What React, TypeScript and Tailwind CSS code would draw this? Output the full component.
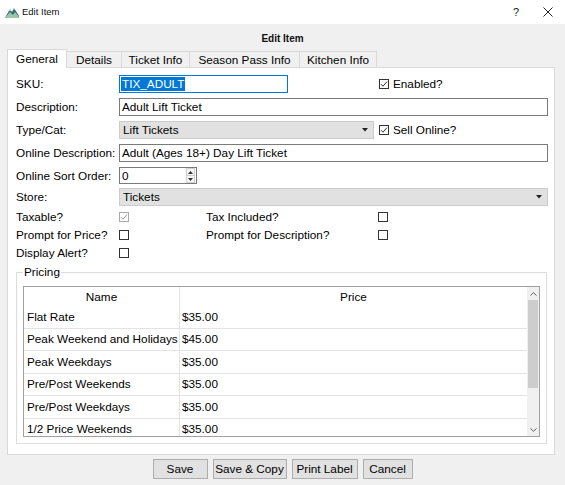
import React from "react";

const rows = [
  ["Flat Rate", "$35.00"],
  ["Peak Weekend and Holidays", "$45.00"],
  ["Peak Weekdays", "$35.00"],
  ["Pre/Post Weekends", "$35.00"],
  ["Pre/Post Weekdays", "$35.00"],
  ["1/2 Price Weekends", "$35.00"],
];

const tabs = [
  { label: "Details", cls: "w-[55px]" },
  { label: "Ticket Info", cls: "w-[68px]" },
  { label: "Season Pass Info", cls: "w-[110px]" },
  { label: "Kitchen Info", cls: "w-[77px]" },
];

function Box({ checked = false, dim = false }: { checked?: boolean; dim?: boolean }) {
  return (
    <span
      className={`w-[10px] h-[10px] shrink-0 border bg-white flex items-center justify-center ${
        dim ? "border-[#a9a9a9]" : "border-[#333333]"
      }`}
    >
      {checked && (
        <svg width="8" height="8" viewBox="0 0 8 8">
          <path d="M1 4.2 L3 6.2 L7 1.6" fill="none" stroke={dim ? "#9a9a9a" : "#333333"} strokeWidth="1" />
        </svg>
      )}
    </span>
  );
}

function Arrow() {
  return (
    <svg width="6" height="4" viewBox="0 0 6 4">
      <path d="M0 0 H6 L3 3.5 Z" fill="#222" />
    </svg>
  );
}

function Label({ children }: { children: React.ReactNode }) {
  return <span className="w-[103px] shrink-0 text-[#000]">{children}</span>;
}

export default function App() {
  return (
    <div className="w-[565px] h-[485px] bg-[#f0f0f0] font-['Liberation_Sans',Arial,sans-serif] text-[11.75px] text-black overflow-hidden">
      {/* title bar */}
      <div className="h-[24px] bg-white flex items-center">
        <svg className="ml-[5px]" width="14" height="11" viewBox="0 0 14 11">
          <path d="M0 11 L5 2 L7 5 L9 1 L14 9 L14 11 Z" fill="#2f6f7a" />
          <path d="M0 11 L5 5 L8 8 L10 5 L14 10 L14 11 Z" fill="#9cc7a4" />
          <path d="M4 3.8 L5 2 L6 3.8 Z M8.3 2.3 L9 1 L9.8 2.4 Z" fill="#ffffff" />
        </svg>
        <span className="ml-[3px] text-[9.5px] text-[#111]">Edit Item</span>
        <div className="ml-auto flex items-center">
          <span className="w-[30px] text-center text-[11px] text-[#222]">?</span>
          <span className="w-[34px] flex justify-center">
            <svg width="10" height="10" viewBox="0 0 10 10">
              <path d="M0.5 0.5 L9.5 9.5 M9.5 0.5 L0.5 9.5" stroke="#222" strokeWidth="1" />
            </svg>
          </span>
        </div>
      </div>

      {/* dialog heading */}
      <div className="h-[25px] pt-[3px] flex items-center justify-center font-bold text-[10px] text-[#111]">
        Edit Item
      </div>

      {/* tabs */}
      <div className="h-[18px] pl-[7px] flex items-end">
        <div className="relative z-10 -mb-px w-[60px] h-[19px] bg-white border border-b-0 border-[#d9d9d9] flex items-center justify-center pb-[1px]">
          General
        </div>
        {tabs.map((t) => (
          <div
            key={t.label}
            className={`${t.cls} h-[16px] bg-[#f0f0f0] border border-l-0 border-b-0 border-[#d9d9d9] flex items-center justify-center`}
          >
            {t.label}
          </div>
        ))}
      </div>

      {/* panel */}
      <div className="ml-[7px] w-[548px] h-[388px] bg-white border border-[#d9d9d9] pl-[8px] pt-[7px]">
        {/* SKU */}
        <div className="h-[18px] flex items-center">
          <Label>SKU:</Label>
          <div className="w-[169px] h-[18px] border border-[#0078d7] flex items-center pl-[1px]">
            <span className="bg-[#0078d7] text-white leading-[14px] px-[1px]">TIX_ADULT</span>
          </div>
          <span className="ml-[91px]">
            <Box checked />
          </span>
          <span className="ml-[4px]">Enabled?</span>
        </div>

        {/* Description */}
        <div className="mt-[5px] h-[18px] flex items-center">
          <Label>Description:</Label>
          <div className="w-[429px] h-[18px] border border-[#7a7a7a] flex items-center pl-[2px]">Adult Lift Ticket</div>
        </div>

        {/* Type/Cat */}
        <div className="mt-[5px] h-[18px] flex items-center">
          <Label>Type/Cat:</Label>
          <div className="w-[255px] h-[18px] bg-[#e1e1e1] border border-[#cccccc] flex items-center pl-[3px] pr-[5px]">
            <span className="flex-1">Lift Tickets</span>
            <Arrow />
          </div>
          <span className="ml-[5px]">
            <Box checked />
          </span>
          <span className="ml-[4px]">Sell Online?</span>
        </div>

        {/* Online Description */}
        <div className="mt-[5px] h-[18px] flex items-center">
          <Label>Online Description:</Label>
          <div className="w-[429px] h-[18px] border border-[#7a7a7a] flex items-center pl-[2px]">
            Adult (Ages 18+) Day Lift Ticket
          </div>
        </div>

        {/* Online Sort Order */}
        <div className="mt-[5px] h-[17px] flex items-center">
          <Label>Online Sort Order:</Label>
          <div className="w-[78px] h-[17px] border border-[#7a7a7a] flex items-center">
            <span className="flex-1 pl-[2px]">0</span>
            <div className="w-[9px] h-[15px] mr-[1px] flex flex-col border border-[#d0d0d0] bg-[#f5f5f5]">
              <div className="flex-1 flex items-center justify-center border-b border-[#d0d0d0]">
                <svg width="5" height="3" viewBox="0 0 5 3">
                  <path d="M0 3 L2.5 0 L5 3 Z" fill="#333" />
                </svg>
              </div>
              <div className="flex-1 flex items-center justify-center">
                <svg width="5" height="3" viewBox="0 0 5 3">
                  <path d="M0 0 H5 L2.5 3 Z" fill="#333" />
                </svg>
              </div>
            </div>
          </div>
        </div>

        {/* Store */}
        <div className="mt-[4px] h-[18px] flex items-center">
          <Label>Store:</Label>
          <div className="w-[429px] h-[18px] bg-[#e1e1e1] border border-[#cccccc] flex items-center pl-[3px] pr-[5px]">
            <span className="flex-1">Tickets</span>
            <Arrow />
          </div>
        </div>

        {/* Checkbox rows */}
        <div className="mt-[2px] h-[18px] flex items-center">
          <Label>Taxable?</Label>
          <Box checked dim />
          <span className="ml-[77px] w-[172px]">Tax Included?</span>
          <Box />
        </div>
        <div className="h-[18px] flex items-center">
          <Label>Prompt for Price?</Label>
          <Box />
          <span className="ml-[77px] w-[172px]">Prompt for Description?</span>
          <Box />
        </div>
        <div className="h-[18px] flex items-center">
          <Label>Display Alert?</Label>
          <Box />
        </div>

        {/* Pricing group */}
        <div className="relative mt-[10px] w-[531px] h-[172px] border border-[#dcdcdc] pl-[6px] pt-[13px]">
          <span className="absolute -top-[8px] left-[6px] bg-white px-[1px] leading-[14px]">Pricing</span>
          <div className="w-[517px] h-[151px] border border-[#a0a0a0] flex overflow-hidden">
            <div className="w-[503px] flex flex-col">
              <div className="h-[19px] shrink-0 flex">
                <div className="w-[156px] border-r border-[#e3e3e3] flex items-center justify-center">Name</div>
                <div className="flex-1 flex items-center justify-center">Price</div>
              </div>
              {rows.map(([n, p]) => (
                <div key={n} className="h-[22.5px] shrink-0 flex border-b border-[#e3e3e3]">
                  <div className="w-[156px] border-r border-[#e3e3e3] flex items-center pl-[3px] whitespace-nowrap">{n}</div>
                  <div className="flex-1 flex items-center pl-[2px]">{p}</div>
                </div>
              ))}
            </div>
            {/* scrollbar */}
            <div className="w-[12px] bg-[#f0f0f0] flex flex-col items-center">
              <div className="h-[13px] flex items-center justify-center">
                <svg width="7" height="4" viewBox="0 0 7 4">
                  <path d="M0.5 3.5 L3.5 0.7 L6.5 3.5" fill="none" stroke="#606060" strokeWidth="1" />
                </svg>
              </div>
              <div className="w-[10px] h-[88px] bg-[#cdcdcd]" />
              <div className="flex-1" />
              <div className="h-[13px] flex items-center justify-center">
                <svg width="7" height="4" viewBox="0 0 7 4">
                  <path d="M0.5 0.5 L3.5 3.3 L6.5 0.5" fill="none" stroke="#606060" strokeWidth="1" />
                </svg>
              </div>
            </div>
          </div>
        </div>
      </div>

      {/* buttons */}
      <div className="mt-[4px] flex justify-center gap-[5px]">
        <button className="w-[55px] h-[20px] bg-[#e1e1e1] border border-[#adadad]">Save</button>
        <button className="w-[74px] h-[20px] bg-[#e1e1e1] border border-[#adadad]">Save &amp; Copy</button>
        <button className="w-[66px] h-[20px] bg-[#e1e1e1] border border-[#adadad]">Print Label</button>
        <button className="w-[50px] h-[20px] bg-[#e1e1e1] border border-[#adadad]">Cancel</button>
      </div>
    </div>
  );
}
